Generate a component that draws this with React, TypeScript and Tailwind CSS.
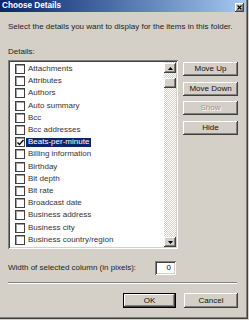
import { Fragment } from 'react';

const raised =
    'bg-[#d4d0c8] shadow-[inset_-1px_-1px_0_#404040,inset_1px_1px_0_#ffffff,inset_-2px_-2px_0_#808080,inset_2px_2px_0_#d4d0c8]';
const sunken =
    'shadow-[inset_1px_1px_0_#808080,inset_-1px_-1px_0_#ffffff,inset_2px_2px_0_#404040,inset_-2px_-2px_0_#d4d0c8]';

const details = [
    'Attachments',
    'Attributes',
    'Authors',
    'Auto summary',
    'Bcc',
    'Bcc addresses',
    'Beats-per-minute',
    'Billing information',
    'Birthday',
    'Bit depth',
    'Bit rate',
    'Broadcast date',
    'Business address',
    'Business city',
    'Business country/region',
];

const Checkbox = ({ checked }: { checked: boolean }) => (
    <span className="w-[10px] h-[10px] shrink-0 bg-white border border-[#404040] shadow-[inset_1px_1px_0_#a0a0a0] flex items-center justify-center">
        {checked && (
            <svg width="7" height="7" viewBox="0 0 7 7">
                <path d="M0.5 3.5 L2.5 5.5 L6.5 1" fill="none" stroke="#000" strokeWidth="1.4" />
            </svg>
        )}
    </span>
);

const Arrow = ({ down }: { down?: boolean }) => (
    <svg width="5" height="3" viewBox="0 0 5 3">
        <path d={down ? 'M0 0 H5 L2.5 3 Z' : 'M0 3 H5 L2.5 0 Z'} fill="#000" />
    </svg>
);

const Button = ({
    label,
    disabled,
    width = 'w-[55px]',
    height = 'h-[14px]',
}: {
    label: string;
    disabled?: boolean;
    width?: string;
    height?: string;
}) => (
    <div className={`${raised} ${width} ${height} flex items-center justify-center`}>
        <span
            className={
                disabled
                    ? 'text-[#9a968e] [text-shadow:1px_1px_0_#ffffff]'
                    : 'text-[#111]'
            }
        >
            {label}
        </span>
    </div>
);

export default function App() {
    return (
        <div
            className="w-[249px] h-[320px] bg-[#d4d0c8] overflow-hidden text-[8px] leading-[10px] text-black"
            style={{ fontFamily: '"Liberation Sans", Arial, sans-serif' }}
        >
            <div className="w-[248px] h-[319px] border-r border-b border-[#404040]">
                <div className="w-[247px] h-[318px] border-r border-b border-[#808080] flex flex-col">
                    <header className="h-[12px] bg-linear-to-r from-[#0a246a] to-[#a6caf0] flex items-center justify-between pl-[2px] pr-[2px]">
                        <span className="text-white font-bold text-[8.2px]">Choose Details</span>
                        <span className={`${raised} w-[9px] h-[9px] mt-[2px] flex items-center justify-center`}>
                            <svg width="5" height="5" viewBox="0 0 5 5">
                                <path d="M0.5 0.5 L4.5 4.5 M4.5 0.5 L0.5 4.5" stroke="#000" strokeWidth="1.2" />
                            </svg>
                        </span>
                    </header>

                    <div className="pl-[8px] flex flex-col">
                        <p className="mt-[10px] text-[#222]">
                            Select the details you want to display for the items in this folder.
                        </p>
                        <p className="mt-[15px] text-[#222]">Details:</p>

                        <div className="mt-[3px] flex">
                            <div className={`${sunken} bg-white w-[170px] h-[189px] p-[2px] flex`}>
                                <ul className="flex-1 overflow-hidden pt-[1px] pl-[5px]">
                                    {details.map((name) => {
                                        const selected = name === 'Beats-per-minute';
                                        return (
                                            <li key={name} className="h-[12.2px] flex items-center">
                                                <Checkbox checked={selected} />
                                                <span
                                                    className={`ml-[1px] px-[2px] h-[9px] flex items-center whitespace-nowrap ${
                                                        selected
                                                            ? 'bg-[#0a246a] text-white'
                                                            : 'text-[#333]'
                                                    }`}
                                                >
                                                    {name}
                                                </span>
                                            </li>
                                        );
                                    })}
                                    {/* next row, only the top of its box shows */}
                                    <li className="h-[12.2px] flex items-center">
                                        <Checkbox checked={false} />
                                    </li>
                                </ul>
                                <div className="w-[12px] flex flex-col bg-[repeating-conic-gradient(#d4d0c8_0_25%,#ffffff_0_50%)] bg-[length:2px_2px]">
                                    <div className={`${raised} h-[10px] mt-[1px] flex items-center justify-center`}>
                                        <Arrow />
                                    </div>
                                    <div className={`${raised} h-[10px] mt-[5px]`} />
                                    <div className="flex-1" />
                                    <div className={`${raised} h-[10px] flex items-center justify-center`}>
                                        <Arrow down />
                                    </div>
                                </div>
                            </div>

                            <div className="ml-[5px] mt-[2px] flex flex-col gap-[5.5px]">
                                {[
                                    ['Move Up', false],
                                    ['Move Down', false],
                                    ['Show', true],
                                    ['Hide', false],
                                ].map(([label, disabled]) => (
                                    <Fragment key={label as string}>
                                        <Button label={label as string} disabled={disabled as boolean} />
                                    </Fragment>
                                ))}
                            </div>
                        </div>

                        <div className="mt-[12px] w-[168px] flex items-center justify-between">
                            <span className="text-[#222]">Width of selected column (in pixels):</span>
                            <div className={`${sunken} bg-white w-[21px] h-[14px] flex items-center justify-end pr-[5px]`}>
                                0
                            </div>
                        </div>

                        <div className="mt-[7px] w-[229px] h-[2px] border-t border-[#808080] border-b border-b-white" />

                        <div className="mt-[9px] pl-[115px] flex gap-[8px]">
                            <div className="border border-black">
                                <Button label="OK" width="w-[51px]" height="h-[13px]" />
                            </div>
                            <Button label="Cancel" width="w-[54px]" height="h-[15px]" />
                        </div>
                    </div>
                </div>
            </div>
        </div>
    );
}
